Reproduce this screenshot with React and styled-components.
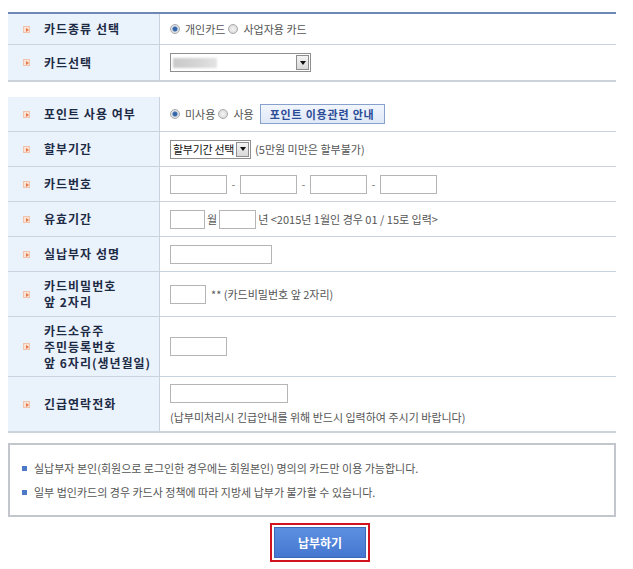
import React from "react";
import styled, { createGlobalStyle } from "styled-components";

const Global = createGlobalStyle`
  html, body { margin: 0; padding: 0; background: #fff; }
  body { font-family: "Noto Sans CJK KR", "Noto Sans", sans-serif; color: #555; }
`;

const Page = styled.div`
  width: 633px;
  padding: 12px 17px 0 8px;
  box-sizing: border-box;
`;

const Table = styled.div`
  border-top: ${(p) => (p.$top ? "2px solid #6b89b4" : "none")};
  border-bottom: 2px solid #cdd3da;
  margin-bottom: ${(p) => p.$gap || 0}px;
`;

const Row = styled.div`
  display: grid;
  grid-template-columns: 152px 1fr;
  min-height: ${(p) => p.$h}px;
  border-top: ${(p) => (p.$first ? "none" : "1px solid #c9d3df")};
`;

const Label = styled.div`
  background: #eaf2fc;
  border-right: 1px solid #c9d3df;
  display: flex;
  align-items: center;
  padding-left: 15px;
  gap: 14px;
  font-size: 12px;
  font-weight: 700;
  letter-spacing: 1px;
  color: #1d2a44;
  line-height: 16px;
`;

const Bullet = styled.span`
  flex: none;
  width: 7px;
  height: 7px;
  background: #fbe3d6;
  border: 1px solid #efc3ad;
  box-sizing: border-box;
  position: relative;
  &::after {
    content: "";
    position: absolute;
    left: 2px;
    top: 1px;
    border-left: 3px solid #e0784a;
    border-top: 2px solid transparent;
    border-bottom: 2px solid transparent;
  }
`;

const Value = styled.div`
  display: flex;
  flex-direction: ${(p) => (p.$col ? "column" : "row")};
  align-items: ${(p) => (p.$col ? "flex-start" : "center")};
  justify-content: ${(p) => (p.$col ? "center" : "flex-start")};
  padding-left: 10px;
  gap: 6px;
  font-size: 11px;
  color: #555;
`;

const Line = styled.div`
  display: flex;
  align-items: center;
  gap: ${(p) => p.$gap ?? 3}px;
  justify-content: flex-start;
`;

const Radio = styled.span`
  width: 10px;
  height: 10px;
  border-radius: 50%;
  box-sizing: border-box;
  border: 1px solid #a9a9a9;
  margin-right: 2px;
  background: ${(p) =>
    p.$on
      ? "radial-gradient(circle, #2f5f9e 0, #3b6db0 2px, #d8dde3 3px, #eef1f4 5px)"
      : "radial-gradient(circle, #f4f4f4 0, #d7d7d7 5px)"};
  flex: none;
`;

const Input = styled.span`
  display: inline-block;
  width: ${(p) => p.$w}px;
  height: 19px;
  border: 1px solid #b5b5b5;
  box-sizing: border-box;
  background: #fff;
  flex: none;
`;

const Select = styled.span`
  display: inline-flex;
  align-items: center;
  width: ${(p) => (p.$w ? `${p.$w}px` : "auto")};
  height: 19px;
  border: 1px solid #8f8f8f;
  box-sizing: border-box;
  background: #fff;
  font-size: 11px;
  letter-spacing: -0.3px;
  color: #111;
  padding: 0 16px 0 2px;
  position: relative;
  flex: none;
  white-space: nowrap;
`;

const Arrow = styled.span`
  position: absolute;
  right: 1px;
  top: 1px;
  bottom: 1px;
  width: 13px;
  background: linear-gradient(#f4f4f4, #d9d9d9);
  border: 1px solid #8d8d8d;
  box-sizing: border-box;
  display: flex;
  align-items: center;
  justify-content: center;
  &::after {
    content: "";
    border-top: 4px solid #111;
    border-left: 3px solid transparent;
    border-right: 3px solid transparent;
  }
`;

const Blur = styled.span`
  width: 44px;
  height: 10px;
  background: linear-gradient(90deg, #c9c9c9, #d6d6d6 60%, #e4e4e4);
  filter: blur(1px);
`;

const Dash = styled.span`
  width: 13px;
  text-align: center;
  color: #777;
`;

const InfoButton = styled.span`
  display: inline-flex;
  align-items: center;
  height: 18px;
  padding: 0 9px;
  margin-left: 3px;
  background: linear-gradient(#f2f6fd, #dfe8f7);
  border: 1px solid #87a1cc;
  color: #2a4b96;
  font-weight: 700;
  font-size: 11px;
  letter-spacing: 0.8px;
`;

const Notice = styled.div`
  margin-top: 10px;
  border: 2px solid #c3c6cb;
  padding: 11px 0 11px 12px;
  display: flex;
  flex-direction: column;
`;

const NoticeItem = styled.div`
  display: flex;
  align-items: center;
  gap: 7px;
  height: 24px;
  font-size: 11px;
  color: #555;
  &::before {
    content: "";
    width: 5px;
    height: 5px;
    background: #4d79c7;
  }
`;

const Actions = styled.div`
  display: flex;
  justify-content: center;
  padding-top: 6px;
  padding-left: 16px;
`;

const SubmitFrame = styled.div`
  border: 2px solid #d0141f;
  padding: 2px;
`;

const Submit = styled.button`
  width: 92px;
  height: 31px;
  border: 1px solid #3d68b6;
  background: linear-gradient(#5d8fe0, #4577d1);
  color: #fff;
  font-family: inherit;
  font-weight: 700;
  font-size: 12px;
  display: block;
`;

function L({ children }) {
  return (
    <Label>
      <Bullet />
      <span>{children}</span>
    </Label>
  );
}

export default function App() {
  return (
    <Page>
      <Global />
      <Table $top $gap={15}>
        <Row $first $h={30}>
          <L>카드종류 선택</L>
          <Value>
            <Line>
              <Radio $on /> 개인카드 <Radio /> 사업자용 카드
            </Line>
          </Value>
        </Row>
        <Row $h={35}>
          <L>카드선택</L>
          <Value>
            <Select $w={141}>
              <Blur />
              <Arrow />
            </Select>
          </Value>
        </Row>
      </Table>

      <Table>
        <Row $first $h={34}>
          <L>포인트 사용 여부</L>
          <Value>
            <Line>
              <Radio $on /> 미사용 <Radio /> 사용
              <InfoButton>포인트 이용관련 안내</InfoButton>
            </Line>
          </Value>
        </Row>
        <Row $h={34}>
          <L>할부기간</L>
          <Value>
            <Line $gap={4}>
              <Select>
                할부기간 선택
                <Arrow />
              </Select>
              (5만원 미만은 할부불가)
            </Line>
          </Value>
        </Row>
        <Row $h={34}>
          <L>카드번호</L>
          <Value>
            <Line $gap={0}>
              <Input $w={57} />
              <Dash>-</Dash>
              <Input $w={57} />
              <Dash>-</Dash>
              <Input $w={57} />
              <Dash>-</Dash>
              <Input $w={57} />
            </Line>
          </Value>
        </Row>
        <Row $h={34}>
          <L>유효기간</L>
          <Value>
            <Line $gap={2}>
              <Input $w={35} /> 월 <Input $w={37} /> 년 &lt;2015년 1월인 경우 01 / 15로 입력&gt;
            </Line>
          </Value>
        </Row>
        <Row $h={34}>
          <L>실납부자 성명</L>
          <Value>
            <Input $w={102} />
          </Value>
        </Row>
        <Row $h={44}>
          <L>
            카드비밀번호
            <br />앞 2자리
          </L>
          <Value>
            <Line $gap={5}>
              <Input $w={36} /> ** (카드비밀번호 앞 2자리)
            </Line>
          </Value>
        </Row>
        <Row $h={59}>
          <L>
            카드소유주
            <br />주민등록번호
            <br />앞 6자리(생년월일)
          </L>
          <Value>
            <Input $w={57} />
          </Value>
        </Row>
        <Row $h={54}>
          <L>긴급연락전화</L>
          <Value $col>
            <Input $w={118} />
            <span>(납부미처리시 긴급안내를 위해 반드시 입력하여 주시기 바랍니다)</span>
          </Value>
        </Row>
      </Table>

      <Notice>
        <NoticeItem>실납부자 본인(회원으로 로그인한 경우에는 회원본인) 명의의 카드만 이용 가능합니다.</NoticeItem>
        <NoticeItem>일부 법인카드의 경우 카드사 정책에 따라 지방세 납부가 불가할 수 있습니다.</NoticeItem>
      </Notice>

      <Actions>
        <SubmitFrame>
          <Submit>납부하기</Submit>
        </SubmitFrame>
      </Actions>
    </Page>
  );
}
